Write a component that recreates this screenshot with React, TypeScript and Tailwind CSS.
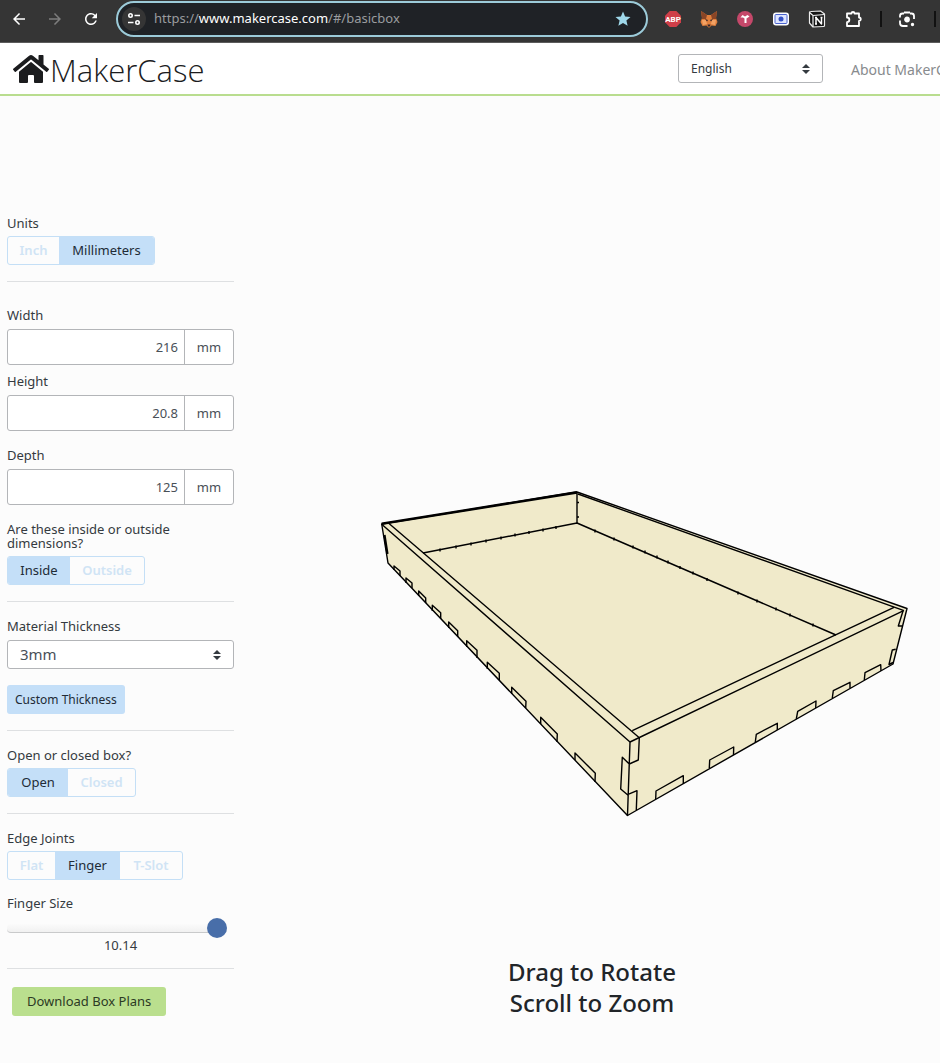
import { useState } from "react";
import { FaHome } from "react-icons/fa";
import { MdArrowBack, MdArrowForward, MdRefresh, MdStar } from "react-icons/md";

const WALL_TABS = [
  "394,570 394,566 400,571 400,576",
  "406,583 406,578 412,583 412,588",
  "418.7,596 418.7,591 425.7,598 425.7,603",
  "432.3,611 432.3,605.3 440.7,612.7 440.7,619",
  "448.7,628 448.7,622 457.7,630.7 457.7,637",
  "466.7,647 466.7,640.7 477,650.3 477,658",
  "487.3,669 487.3,662.3 499.3,673.3 499.3,680",
  "511.7,694 511.7,687.3 526,701.3 525.7,708",
  "540.7,724 540.7,717.3 557.3,734 557,742",
  "575,760 575,753 595.3,773.3 595,782",
  "881,671 880.7,664.7 865,672.7 864.3,680",
  "850,688 850,682.3 833.3,690.7 832.3,698",
  "815.7,708 816,701 797.7,711.3 796.3,719",
  "777.3,730 777.3,723.3 756.3,734.3 755.3,742",
  "733.5,755 733.7,747 709.7,760 709.3,768",
  "683.3,783.7 683.3,775.7 656,791 655.7,799",
];

const FLOOR_TICKS = [
  [440, 550], [456, 547], [471, 544], [486, 541], [501, 538], [515, 535], [529, 532.5], [543, 530], [556, 527.5],
  [595, 531], [614, 539], [633, 547], [645, 552], [657, 557], [668, 562], [680, 567.5], [693, 573], [707, 579.5],
  [738, 593], [757, 601], [776, 609], [790, 615], [813, 625],
];

function BoxDrawing() {
  return (
    <svg viewBox="244 96 696 852" className="block w-full" role="img" aria-label="Box preview" fill="none" stroke="#000" strokeWidth="1.4" strokeLinejoin="round">
      <polygon points="381.7,524 577,492 907,608.5 893,664 627.5,815.5 388,563" fill="#f0eaca" />
      <path d="M381.7 524.3L630 742M388.7 523.3L639.3 737.7M630 742L903.6 610.7M632.3 730.7L894 607.3" />
      <path d="M381.7 523.8L577 492.4" strokeWidth="2.6" />
      <path d="M577 492V523M578 494L904 610.7" />
      <path d="M423 553L577 523L836 635" strokeWidth="1.5" />
      {FLOOR_TICKS.map(([x, y]) => (
        <path key={x} d={`M${x} ${y - 1.5}v3`} />
      ))}
      <path d="M577 502.5h2M577 517h2" />
      <path d="M384.5 535L387.5 554" strokeWidth="2.2" />
      {WALL_TABS.map((points) => (
        <polyline key={points} points={points} />
      ))}
      <path d="M630 742L627.5 815.5M639.3 737.7L638.3 760L629.3 764L622.3 757.3L620.7 789L627.5 794.7L637 790.7L636.3 810" />
      <path d="M903 611L898.3 626H902M895.7 649.3L892.3 650L889 664.5L893 662.5" />
    </svg>
  );
}

function FoxIcon() {
  return (
    <svg viewBox="0 0 18 18" className="size-[18px]">
      <path d="M1 1l6 4h4l6-4-1 7 1.500 4-2 4-4-.5-2 2H8.500l-2-2-4 .5-2-4L2 8z" fill="#e07f3c" />
      <path d="M1 1l6 4-1 4-4 0zM17 1l-6 4 1 4 4 0z" fill="#8a4526" />
      <path d="M2 10h4l1 4-4 1zM16 10h-4l-1 4 4 1z" fill="#f2a264" />
      <path d="M5 9l3 1-1 1.500zM13 9l-3 1 1 1.500zM7.500 14.500h3l-.5 2H8z" fill="#35262a" />
    </svg>
  );
}

function Toolbar() {
  return (
    <div className="flex h-[43px] items-center overflow-hidden border-b border-[#5c5c5c] bg-[#353535] pb-1 text-white">
      <nav className="flex shrink-0 items-center gap-[18px] pl-[10px]" aria-label="Browser">
        <button aria-label="Back"><MdArrowBack className="size-[18px]" /></button>
        <button aria-label="Forward" className="text-[#7d7d7d]"><MdArrowForward className="size-[18px]" /></button>
        <button aria-label="Reload"><MdRefresh className="size-[18px]" /></button>
      </nav>
      <div className="ml-4 flex h-9 w-[532px] shrink-0 items-center rounded-full border-2 border-[#9ccbd9] bg-[#1f2226] pr-[14px] pl-1">
        <button aria-label="Site information" className="flex size-6 shrink-0 items-center justify-center rounded-full bg-[#353535]">
          <svg viewBox="0 0 14 14" className="size-[14px]" fill="none" stroke="#fff" strokeWidth="1.6">
            <circle cx="3.5" cy="3.5" r="1.7" />
            <path d="M7.5 3.5H13M1 10.500H6.500" />
            <circle cx="10.5" cy="10.5" r="1.7" />
          </svg>
        </button>
        <p className="ml-2 grow text-[13px] text-[#9a9c9f]">
          https://<span className="text-white">www.makercase.com</span>/#/basicbox
        </p>
        <button aria-label="Bookmark" className="text-[#9fd8ea]"><MdStar className="size-[18px]" /></button>
      </div>
      <div className="ml-4 flex shrink-0 items-center gap-[18px]">
        <button aria-label="ABP">
          <svg viewBox="0 0 18 18" className="size-[18px]">
            <path d="M5.700 1h6.600L17 5.700v6.600L12.300 17H5.700L1 12.300V5.700z" fill="#cf3f49" />
            <text x="9" y="12" textAnchor="middle" fill="#fff" fontSize="8" fontWeight="700" fontFamily="Roboto, sans-serif">ABP</text>
          </svg>
        </button>
        <button aria-label="Wallet"><FoxIcon /></button>
        <button aria-label="Helper">
          <svg viewBox="0 0 18 18" className="size-[18px]">
            <circle cx="9" cy="9" r="8" fill="#c5486a" />
            <path d="M4.500 7.500l2-2.500 2.500 1.500L11.500 5l2 1.500-3 2V13h-2V8.500L7 7.500z" fill="#fff" />
          </svg>
        </button>
        <button aria-label="Capture">
          <svg viewBox="0 0 18 18" className="size-[18px]">
            <rect x="1" y="2.5" width="16" height="13" rx="3" fill="#fff" />
            <rect x="3" y="4.5" width="12" height="9" rx="1" fill="#dfe6ff" stroke="#4a63cf" strokeWidth="1" />
            <circle cx="9" cy="9" r="2.5" fill="#3450c4" />
          </svg>
        </button>
        <button aria-label="Notes">
          <svg viewBox="0 0 18 18" className="size-[18px]" strokeLinejoin="round">
            <path d="M1.500 2.500Q1.500 1.500 3 1.500L12.500 1L16.500 4V15.500Q16.500 16.500 15.500 16.500L5 17L1.500 13z" fill="#151515" stroke="#eee" strokeWidth="1.2" />
            <path d="M1.500 2.500L5 5.500V17M5 5.500L16.500 4.500" fill="none" stroke="#eee" strokeWidth="1.2" />
            <path d="M8 14V7.500L13.500 14V7.500M7 7.500h2M12.500 7.500h2M7 14h2" fill="none" stroke="#fff" strokeWidth="1.5" />
          </svg>
        </button>
        <button aria-label="Extensions">
          <svg viewBox="0 0 18 18" className="size-[18px]" fill="none" stroke="#fff" strokeWidth="1.8" strokeLinejoin="round">
            <path d="M3 3.500h4.500a1.500 1.500 0 0 1 3 0H15v4a1.500 1.500 0 0 1 0 3.500V16H3v-3.800a2.300 2.300 0 0 0 0-4.700z" />
          </svg>
        </button>
        <span className="h-4 w-[2px] bg-[#111]" />
        <button aria-label="Lens" className="-ml-[2px]">
          <svg viewBox="0 0 18 18" className="size-[18px]" fill="none" stroke="#fff" strokeWidth="1.8">
            <path d="M2 7.500V6a2.500 2.500 0 0 1 2.500-2.500H6M12 3.500h1.500A2.500 2.500 0 0 1 16 6V9M6 2.500h6M2 10.500V13a3 3 0 0 0 3 3h4.500" />
            <circle cx="9" cy="9.5" r="2" fill="#fff" />
            <circle cx="14.5" cy="14.5" r="0.8" fill="#fff" />
          </svg>
        </button>
        <span className="h-4 w-[2px] bg-[#111]" />
      </div>
    </div>
  );
}

function SelectArrows() {
  return (
    <svg viewBox="0 0 8 10" className="pointer-events-none absolute top-1/2 right-[13px] h-[10px] w-2 -translate-y-1/2" fill="#343a40">
      <path d="M4 0l4 4H0zM4 10L0 6h8z" />
    </svg>
  );
}

type Option = { name: string; width: string };

function Toggle({ label, options, initial }: { label: string; options: Option[]; initial: string }) {
  const [selected, setSelected] = useState(initial);
  return (
    <div role="group" aria-label={label}>
      <p className="mb-[6px] leading-[14px]">{label}</p>
      <div className="inline-flex h-[29px] overflow-hidden rounded-[3px] border border-[#c4dff6] align-top">
        {options.map(({ name, width }) => (
          <button
            key={name}
            aria-pressed={name === selected}
            onClick={() => setSelected(name)}
            className={`${width} pt-px ${name === selected ? "bg-[#c4dff8] text-[#212b36]" : "font-semibold text-[#d0e4f5]"}`}
          >
            {name}
          </button>
        ))}
      </div>
    </div>
  );
}

function Dimension({ id, label, value }: { id: string; label: string; value: string }) {
  return (
    <div>
      <label htmlFor={id} className="mb-[7px] block leading-[14px]">{label}</label>
      <div className="flex h-9 overflow-hidden rounded-[3px] border border-[#b3b5b8] bg-white text-[#495057]">
        <input id={id} defaultValue={value} className="w-0 grow pt-[2px] pr-[6px] text-right outline-none" />
        <span className="flex w-[49px] items-center justify-center border-l border-[#b3b5b8] pt-[2px]">mm</span>
      </div>
    </div>
  );
}

function Rule() {
  return <hr className="mt-4 border-[#dee0e2]" />;
}

export default function App() {
  return (
    <div className="min-h-screen overflow-hidden bg-[#fcfcfc] font-['Noto_Sans',sans-serif] text-[13px] text-[#343a40]">
      <Toolbar />
      <header className="flex h-[53px] items-center overflow-hidden border-b-2 border-[#b9dd8f] bg-white whitespace-nowrap">
        <a href="#/" className="ml-3 flex items-center text-[#1b1c1e]">
          <FaHome className="h-8 w-[38px]" />
          <span className="pt-[2px] font-['Open_Sans','Noto_Sans',sans-serif] text-[31px] leading-9 font-light">MakerCase</span>
        </a>
        <div className="grow" />
        <div className="relative mr-7 w-[145px] shrink-0">
          <select aria-label="Language" className="h-[29px] w-full appearance-none rounded-[3px] border border-[#b3b5b8] bg-white pt-px pl-3 text-[12px]">
            <option>English</option>
          </select>
          <SelectArrows />
        </div>
        <a href="#/about" className="w-[89px] shrink-0 pt-px text-[14px] text-[#888b8e]">About MakerCase</a>
      </header>
      <div className="flex">
        <aside className="w-[234px] shrink-0 pt-[120px] pl-[7px]">
          <Toggle
            label="Units"
            options={[{ name: "Inch", width: "w-[51px]" }, { name: "Millimeters", width: "w-[95px]" }]}
            initial="Millimeters"
          />
          <Rule />
          <div className="mt-[26px]">
            <Dimension id="width" label="Width" value="216" />
          </div>
          <div className="mt-[9px]">
            <Dimension id="height" label="Height" value="20.8" />
          </div>
          <div className="mt-[17px] mb-[17px]">
            <Dimension id="depth" label="Depth" value="125" />
          </div>
          <Toggle
            label="Are these inside or outside dimensions?"
            options={[{ name: "Inside", width: "w-[62px]" }, { name: "Outside", width: "w-[74px]" }]}
            initial="Inside"
          />
          <Rule />
          <label htmlFor="thickness" className="mt-[17px] mb-[7px] block leading-[14px]">Material Thickness</label>
          <div className="relative">
            <select id="thickness" className="h-[29px] w-full appearance-none rounded-[3px] border border-[#b3b5b8] bg-white pl-3 text-[15px] text-[#495057]">
              <option>3mm</option>
            </select>
            <SelectArrows />
          </div>
          <button className="mt-4 block h-[29px] rounded-[3px] bg-[#c4dff8] px-2 text-[12px] text-[#212b36]">Custom Thickness</button>
          <Rule />
          <div className="mt-[17px]">
            <Toggle
              label="Open or closed box?"
              options={[{ name: "Open", width: "w-[60px]" }, { name: "Closed", width: "w-[67px]" }]}
              initial="Open"
            />
          </div>
          <Rule />
          <div className="mt-[17px] mb-4">
            <Toggle
              label="Edge Joints"
              options={[{ name: "Flat", width: "w-[47px]" }, { name: "Finger", width: "w-[65px]" }, { name: "T-Slot", width: "w-[62px]" }]}
              initial="Finger"
            />
          </div>
          <label htmlFor="finger" className="mb-2 block leading-[14px]">Finger Size</label>
          <input
            id="finger"
            type="range"
            min="3"
            max="10.14"
            step="any"
            defaultValue="10.14"
            className="block h-5 w-[220px] appearance-none bg-transparent [&::-webkit-slider-runnable-track]:h-[9px] [&::-webkit-slider-runnable-track]:rounded-[4px] [&::-webkit-slider-runnable-track]:border-b [&::-webkit-slider-runnable-track]:border-[#c9cacb] [&::-webkit-slider-runnable-track]:bg-linear-to-b [&::-webkit-slider-runnable-track]:from-[#fbfbfb] [&::-webkit-slider-runnable-track]:to-[#f1f1f1] [&::-webkit-slider-thumb]:-mt-[6px] [&::-webkit-slider-thumb]:size-5 [&::-webkit-slider-thumb]:appearance-none [&::-webkit-slider-thumb]:rounded-full [&::-webkit-slider-thumb]:bg-[#486ea9]"
          />
          <p className="text-center leading-[14px]">10.14</p>
          <Rule />
          <button className="mt-[18px] ml-[5px] block h-[29px] rounded-[3px] bg-[#badf8e] px-[15px] text-[#2c3a24]">Download Box Plans</button>
        </aside>
        <main className="min-w-0 grow pl-[10px]">
          <BoxDrawing />
          <p className="mt-2 text-center text-[24px] leading-[31px] font-medium text-[#212529]">
            Drag to Rotate<br />Scroll to Zoom
          </p>
        </main>
      </div>
    </div>
  );
}
